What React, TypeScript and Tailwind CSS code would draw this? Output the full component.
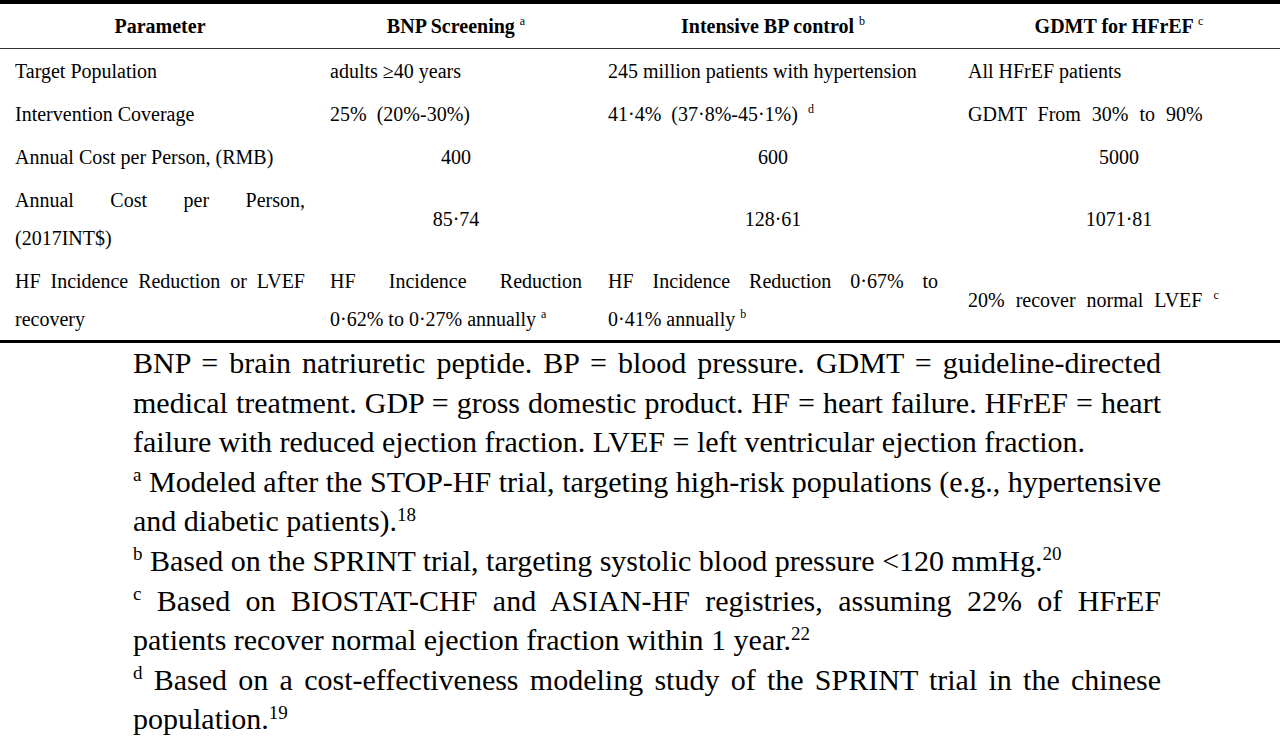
const serif = "font-['Liberation_Serif','Times_New_Roman',serif]";

// preflight already raises <sup> by half an em
function Sup({ children }: { children: React.ReactNode }) {
    return <sup className="text-[12px] font-normal leading-none align-[2px]">{children}</sup>;
}

function FnSup({ children }: { children: React.ReactNode }) {
    return <sup className="text-[19px] leading-none align-[1px]">{children}</sup>;
}

const cols = 'grid grid-cols-[320px_278px_360px_322px]';
const c1 = 'pl-[15px] pr-[15px]';
const c2 = 'pl-[10px] pr-[16px]';
const c3 = 'pl-[10px] pr-[20px]';
const c4 = 'pl-[10px] pr-[10px]';
const pads = [c1, c2, c3, c4];

function Row({ cells }: { cells: React.ReactNode[] }) {
    return (
        <div className={`${cols} py-[2.5px]`}>
            {cells.map((c, i) => (
                <div key={i} className={`${pads[i]} flex items-center leading-[38px]`}>
                    <div className="w-full text-justify">{c}</div>
                </div>
            ))}
        </div>
    );
}

export default function App() {
    return (
        <div className={`w-[1280px] h-[736px] bg-white text-black overflow-hidden ${serif}`}>
            <div className="border-t-[4px] border-b-[3px] border-black text-[20px]">
                <div className={`${cols} h-[45px] items-center font-bold border-b-[1.5px] border-[#333]`}>
                    <div className={`${c1} text-center`}>Parameter</div>
                    <div className={`${c2} text-center`}>BNP Screening <Sup>a</Sup></div>
                    <div className={`${c3} text-center`}>Intensive BP control <Sup>b</Sup></div>
                    <div className={`${c4} text-center`}>GDMT for HFrEF <Sup>c</Sup></div>
                </div>
                <Row cells={[
                    'Target Population',
                    'adults ≥40 years',
                    '245 million patients with hypertension',
                    'All HFrEF patients',
                ]} />
                <Row cells={[
                    'Intervention Coverage',
                    <span className="[word-spacing:5px]">25% (20%-30%)</span>,
                    <span className="[word-spacing:5px]">41·4% (37·8%-45·1%) <Sup>d</Sup></span>,
                    <span className="[word-spacing:6px]">GDMT From 30% to 90%</span>,
                ]} />
                <Row cells={[
                    'Annual Cost per Person, (RMB)',
                    <div className="text-center">400</div>,
                    <div className="text-center">600</div>,
                    <div className="text-center">5000</div>,
                ]} />
                <Row cells={[
                    'Annual Cost per Person, (2017INT$)',
                    <div className="text-center">85·74</div>,
                    <div className="text-center">128·61</div>,
                    <div className="text-center">1071·81</div>,
                ]} />
                <Row cells={[
                    'HF Incidence Reduction or LVEF recovery',
                    <>HF Incidence Reduction 0·62% to 0·27% annually <Sup>a</Sup></>,
                    <>HF Incidence Reduction 0·67% to 0·41% annually <Sup>b</Sup></>,
                    <span className="[word-spacing:6px]">20% recover normal LVEF <Sup>c</Sup></span>,
                ]} />
            </div>

            <div className="w-[1028px] ml-[133px] text-[30px] leading-[39.6px] text-justify">
                <p>
                    BNP = brain natriuretic peptide. BP = blood pressure. GDMT = guideline-directed medical
                    treatment. GDP = gross domestic product. HF = heart failure. HFrEF = heart failure with
                    reduced ejection fraction. LVEF = left ventricular ejection fraction.
                </p>
                <p>
                    <FnSup>a</FnSup> Modeled after the STOP-HF trial, targeting high-risk populations (e.g.,
                    hypertensive and diabetic patients).<FnSup>18</FnSup>
                </p>
                <p>
                    <FnSup>b</FnSup> Based on the SPRINT trial, targeting systolic blood pressure &lt;120 mmHg.<FnSup>20</FnSup>
                </p>
                <p>
                    <FnSup>c</FnSup> Based on BIOSTAT-CHF and ASIAN-HF registries, assuming 22% of HFrEF patients
                    recover normal ejection fraction within 1 year.<FnSup>22</FnSup>
                </p>
                <p>
                    <FnSup>d</FnSup> Based on a cost-effectiveness modeling study of the SPRINT trial in the chinese
                    population.<FnSup>19</FnSup>
                </p>
            </div>
        </div>
    );
}
